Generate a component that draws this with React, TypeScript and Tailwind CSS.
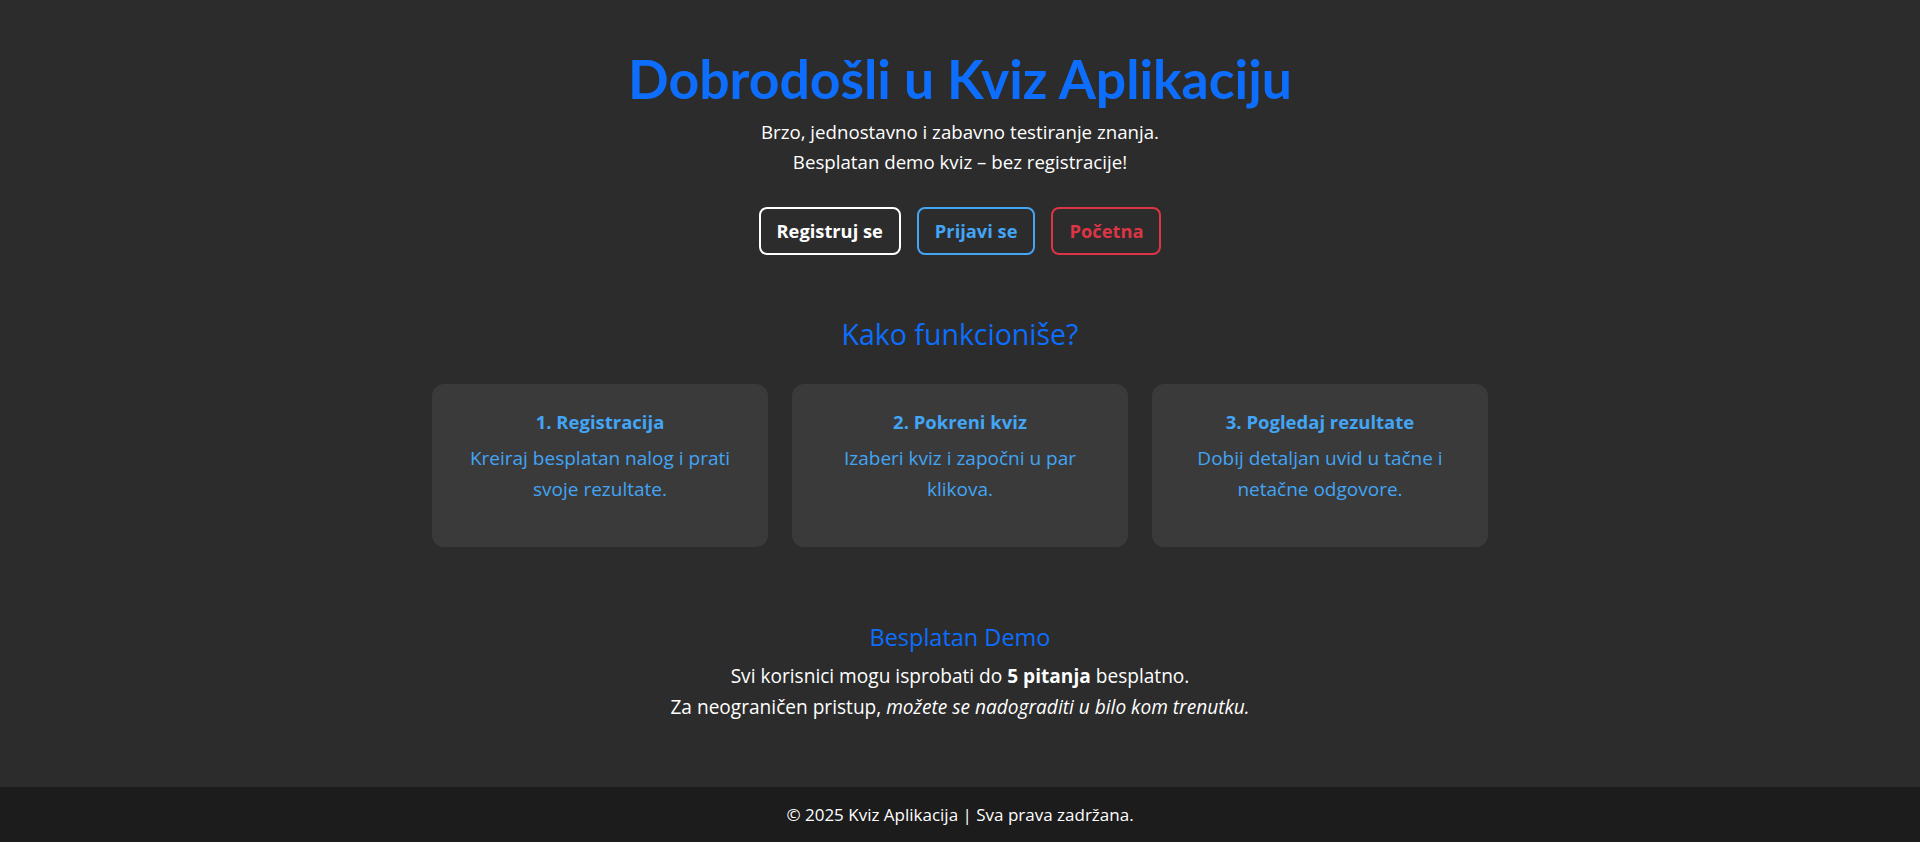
import * as React from "react";

const steps = [
  {
    title: "1. Registracija",
    text: "Kreiraj besplatan nalog i prati svoje rezultate.",
  },
  {
    title: "2. Pokreni kviz",
    text: "Izaberi kviz i započni u par klikova.",
  },
  {
    title: "3. Pogledaj rezultate",
    text: "Dobij detaljan uvid u tačne i netačne odgovore.",
  },
];

const StepCard = ({ title, text }: { title: string; text: string }) => (
  <div className="h-[163px] rounded-xl bg-[#3a3a3a] px-7 pt-[27px] text-[#42a5f5]">
    <h5 className="text-[18.5px] font-bold leading-[22px]">{title}</h5>
    <p className="mt-[10px] text-[19px] leading-[31px]">{text}</p>
  </div>
);

export default function App() {
  return (
    <div
      className="flex min-h-screen flex-col bg-[#2c2c2c] text-white"
      style={{ fontFamily: '"Open Sans", "Noto Sans", sans-serif' }}
    >
      <main className="flex-1 pt-[45px] text-center">
        <h1 className="font-['Lato',sans-serif] text-[53.5px] font-bold leading-[67px] text-[#0d6efd]">
          Dobrodošli u Kviz Aplikaciju
        </h1>
        <p className="mt-[5px] text-[18.7px] leading-[30px]">
          Brzo, jednostavno i zabavno testiranje znanja.
          <br />
          Besplatan demo kviz – bez registracije!
        </p>

        <div className="mt-[30px] flex justify-center gap-4">
          <button className="h-12 rounded-lg border-2 border-white px-4 text-[18.3px] font-bold text-white">
            Registruj se
          </button>
          <button className="h-12 rounded-lg border-2 border-[#42a5f5] px-4 text-[18.3px] font-bold text-[#42a5f5]">
            Prijavi se
          </button>
          <button className="h-12 rounded-lg border-2 border-[#dc3545] px-4 text-[18.3px] font-bold text-[#dc3545]">
            Početna
          </button>
        </div>

        <h2 className="mt-[60px] text-[28.5px] leading-[38px] text-[#0d6efd]">
          Kako funkcioniše?
        </h2>

        <div className="mx-auto mt-[31px] grid w-[1056px] grid-cols-3 gap-6">
          {steps.map((s) => (
            <StepCard key={s.title} title={s.title} text={s.text} />
          ))}
        </div>

        <h4 className="mt-[76px] text-[23.5px] leading-[29px] text-[#0d6efd]">
          Besplatan Demo
        </h4>
        <p className="mt-[9px] text-[19.1px] leading-[31px]">
          Svi korisnici mogu isprobati do <strong>5 pitanja</strong> besplatno.
          <br />
          Za neograničen pristup, <em>možete se nadograditi u bilo kom trenutku.</em>
        </p>
      </main>

      <footer className="h-[55px] bg-[#1c1c1c] text-center text-[17px] leading-[55px]">
        © 2025 Kviz Aplikacija | Sva prava zadržana.
      </footer>
    </div>
  );
}
